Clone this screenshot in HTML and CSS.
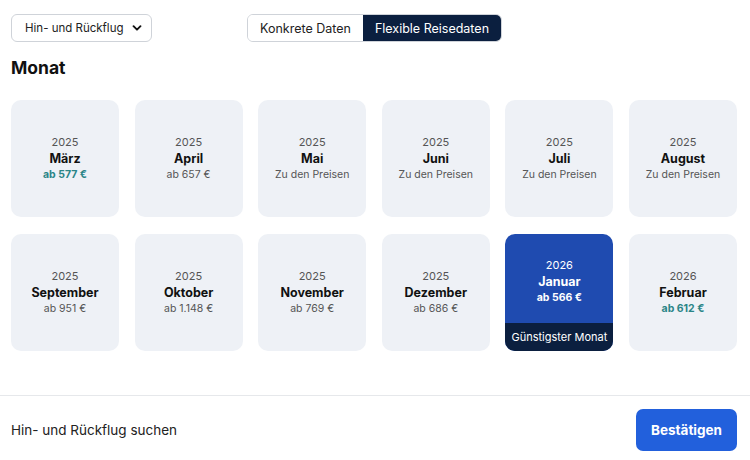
FILE: index.html
```html
<!DOCTYPE html>
<html lang="de">
<head>
<meta charset="UTF-8">
<title>Flexible Reisedaten</title>
<link rel="stylesheet" href="styles.css">
</head>
<body>
<div class="page">
    <div class="topbar">
        <button class="select"><span>Hin- und Rückflug</span>
            <svg class="chevron" width="10" height="10" viewBox="0 0 10 10"><path d="M1.5 3.2 L5 6.7 L8.5 3.2" fill="none" stroke="#111" stroke-width="1.9" stroke-linecap="round" stroke-linejoin="round"/></svg>
        </button>
        <div class="toggle">
            <button class="toggle-btn">Konkrete Daten</button>
            <button class="toggle-btn active">Flexible Reisedaten</button>
        </div>
    </div>

    <h2 class="title">Monat</h2>

    <div class="months">
        <div class="month"><span class="year">2025</span><span class="name">März</span><span class="price cheap">ab 577 €</span></div>
        <div class="month"><span class="year">2025</span><span class="name">April</span><span class="price">ab 657 €</span></div>
        <div class="month"><span class="year">2025</span><span class="name">Mai</span><span class="price">Zu den Preisen</span></div>
        <div class="month"><span class="year">2025</span><span class="name">Juni</span><span class="price">Zu den Preisen</span></div>
        <div class="month"><span class="year">2025</span><span class="name">Juli</span><span class="price">Zu den Preisen</span></div>
        <div class="month"><span class="year">2025</span><span class="name">August</span><span class="price">Zu den Preisen</span></div>
        <div class="month"><span class="year">2025</span><span class="name">September</span><span class="price">ab 951 €</span></div>
        <div class="month"><span class="year">2025</span><span class="name">Oktober</span><span class="price">ab 1.148 €</span></div>
        <div class="month"><span class="year">2025</span><span class="name">November</span><span class="price">ab 769 €</span></div>
        <div class="month"><span class="year">2025</span><span class="name">Dezember</span><span class="price">ab 686 €</span></div>
        <div class="month selected">
            <div class="month-body"><span class="year">2026</span><span class="name">Januar</span><span class="price">ab 566 €</span></div>
            <div class="badge">Günstigster Monat</div>
        </div>
        <div class="month"><span class="year">2026</span><span class="name">Februar</span><span class="price cheap">ab 612 €</span></div>
    </div>
</div>

<div class="footer">
    <span class="footer-text">Hin- und Rückflug suchen</span>
    <button class="confirm">Bestätigen</button>
</div>
</body>
</html>
```

FILE: styles.css
```css
body {
    margin: 0;
    font-family: Inter, "Noto Sans", sans-serif;
    color: #111;
    background: #fff;
    width: 750px;
    height: 460px;
    overflow: hidden;
}
.page {
    padding: 14px 13px 0 11px;
    height: 380px;
    box-sizing: border-box;
}
.topbar {
    display: flex;
    align-items: center;
    height: 28px;
}
.select {
    display: flex;
    align-items: center;
    gap: 8px;
    white-space: nowrap;
    height: 28px;
    width: 141px;
    padding: 0 0 0 13px;
    border: 1px solid #cfd3d9;
    border-radius: 6px;
    background: #fff;
    font-family: inherit;
    font-size: 11.5px;
    color: #222;
}
.chevron {
    flex-shrink: 0;
}
.toggle {
    display: flex;
    margin-left: 95px;
    border: 1px solid #cfd3d9;
    border-radius: 6px;
    overflow: hidden;
    height: 28px;
    box-sizing: border-box;
}
.toggle-btn {
    border: none;
    background: #fff;
    font-family: inherit;
    font-size: 12.5px;
    color: #222;
    padding: 0 12px;
    white-space: nowrap;
}
.toggle-btn.active {
    background: #0b1f3f;
    color: #fff;
    padding: 0 12px;
}
.title {
    margin: 16px 0 22px;
    font-size: 17.5px;
    font-weight: 700;
    line-height: 20px;
}
.months {
    display: grid;
    grid-template-columns: repeat(6, 108px);
    column-gap: 15.6px;
    row-gap: 17px;
}
.month {
    height: 117px;
    background: #eef1f6;
    border-radius: 10px;
    display: flex;
    flex-direction: column;
    align-items: center;
    justify-content: center;
    text-align: center;
    overflow: hidden;
}
.month span {
    display: block;
}
.year {
    font-size: 11px;
    color: #555;
    line-height: 16px;
}
.name {
    font-size: 12.5px;
    font-weight: 700;
    line-height: 17px;
}
.price {
    font-size: 10.5px;
    color: #555;
    line-height: 16px;
}
.price.cheap {
    color: #2a8587;
    font-weight: 700;
}
.month.selected {
    background: #1f4bb0;
    color: #fff;
    justify-content: stretch;
}
.month-body {
    flex: 1;
    display: flex;
    flex-direction: column;
    justify-content: center;
    padding-top: 6px;
}
.month.selected .year,
.month.selected .price {
    color: #fff;
}
.month.selected .price {
    font-weight: 700;
}
.badge {
    width: 100%;
    height: 28px;
    line-height: 28px;
    background: #0b1f3f;
    font-size: 11px;
    color: #fff;
}
.footer {
    border-top: 1px solid #e6e8eb;
    margin-top: 15px;
    display: flex;
    align-items: center;
    justify-content: space-between;
    padding: 13px 13px 0 11px;
}
.footer-text {
    font-size: 13.5px;
    color: #222;
}
.confirm {
    width: 101px;
    height: 42px;
    background: #2260dc;
    color: #fff;
    border: none;
    border-radius: 7px;
    font-family: inherit;
    font-size: 13.5px;
    font-weight: 700;
}
```
